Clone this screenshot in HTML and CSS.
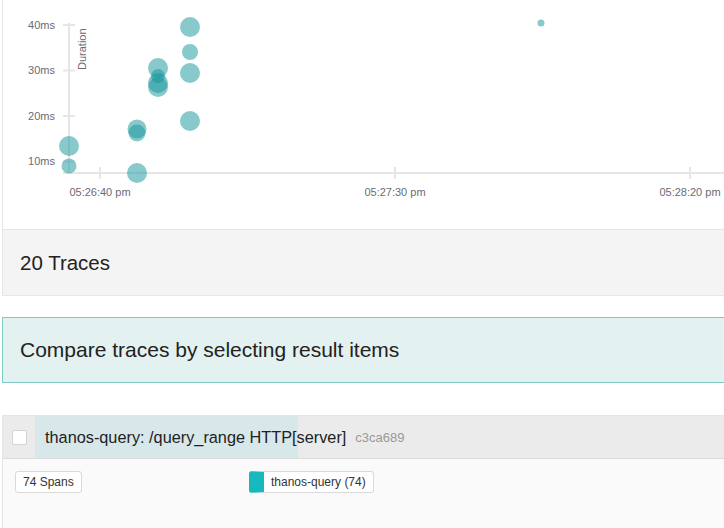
FILE: index.html
```html
<!DOCTYPE html>
<html lang="en">
<head>
<meta charset="utf-8">
<title>Search results</title>
<link rel="stylesheet" href="styles.css">
</head>
<body>
<main class="page">
  <section class="card">
    <div class="chart">
      <svg class="plot" width="721" height="229" viewBox="3 0 721 229" xmlns="http://www.w3.org/2000/svg">
        <g class="axis">
          <line x1="69" y1="23" x2="69" y2="174"/>
          <line x1="63" y1="25" x2="75" y2="25"/>
          <line x1="63" y1="70.5" x2="75" y2="70.5"/>
          <line x1="63" y1="116" x2="75" y2="116"/>
          <line x1="63" y1="161.5" x2="75" y2="161.5"/>
          <line x1="63" y1="173" x2="724" y2="173"/>
          <line x1="100" y1="167" x2="100" y2="179"/>
          <line x1="395" y1="167" x2="395" y2="179"/>
          <line x1="690" y1="167" x2="690" y2="179"/>
        </g>
        <g class="tick-text y-ticks">
          <text x="55" y="25" dy="0.35em">40ms</text>
          <text x="55" y="70.5" dy="0.35em">30ms</text>
          <text x="55" y="116" dy="0.35em">20ms</text>
          <text x="55" y="161.5" dy="0.35em">10ms</text>
        </g>
        <g class="tick-text x-ticks">
          <text x="100" y="195.5">05:26:40 pm</text>
          <text x="395" y="195.5">05:27:30 pm</text>
          <text x="690" y="195.5">05:28:20 pm</text>
        </g>
        <text class="tick-text axis-title" transform="translate(86 70) rotate(-90)">Duration</text>
        <g class="dots">
          <circle cx="69" cy="146" r="10"/>
          <circle cx="69" cy="166" r="7.5"/>
          <circle cx="137" cy="173" r="10"/>
          <circle cx="137" cy="129" r="9.5"/>
          <circle cx="137" cy="133" r="8.5"/>
          <circle cx="158" cy="68" r="10"/>
          <circle cx="158" cy="76" r="7"/>
          <circle cx="158" cy="83" r="10"/>
          <circle cx="158" cy="87" r="10"/>
          <circle cx="190" cy="27" r="10"/>
          <circle cx="190" cy="52" r="8"/>
          <circle cx="190" cy="73" r="10"/>
          <circle cx="190" cy="121" r="10"/>
          <circle cx="541" cy="23" r="3.5"/>
        </g>
      </svg>
    </div>
    <div class="card-header">
      <h2 class="count">20 Traces</h2>
    </div>
  </section>

  <div class="compare">Compare traces by selecting result items</div>

  <article class="result">
    <div class="result-head">
      <span class="check-cell"><span class="checkbox"></span></span>
      <div class="title-wrap">
        <div class="duration-bar" style="width:263px"></div>
        <span class="title">thanos-query: /query_range HTTP[server]</span>
        <span class="trace-id">c3ca689</span>
      </div>
    </div>
    <div class="result-body">
      <div class="col-spans"><span class="tag">74 Spans</span></div>
      <div class="col-services"><span class="tag service">thanos-query (74)</span></div>
    </div>
  </article>
</main>
</body>
</html>
```

FILE: styles.css
```css
html, body {
  margin: 0;
  padding: 0;
  background: #fff;
  overflow: hidden;
}

body {
  font-family: "Liberation Sans", Arial, sans-serif;
  color: #222;
}

.page {
  padding-left: 2px;
}

.card {
  border: 1px solid #e6e6e6;
  border-top: none;
  border-right: none;
  overflow: hidden;
}

.chart {
  height: 229px;
  background: #fff;
}

.plot {
  display: block;
}

.axis line {
  stroke: #e6e6e9;
  stroke-width: 2;
}

.tick-text {
  font-family: "Liberation Sans", Arial, sans-serif;
  font-size: 11px;
  fill: #6b6b76;
}

.y-ticks text {
  text-anchor: end;
}

.x-ticks text {
  text-anchor: middle;
}

.dots circle {
  fill: #12939a;
  fill-opacity: 0.5;
}

.card-header {
  height: 65px;
  border-top: 1px solid #e6e6e6;
  background: #f4f4f4;
  padding-left: 17px;
  display: flex;
  align-items: center;
}

.count {
  margin: 0;
  font-size: 20.5px;
  font-weight: normal;
  color: #222;
}

.compare {
  margin-top: 21px;
  height: 64px;
  border: 1px solid #80c9c4;
  border-right: none;
  background: #e3f1f0;
  padding-left: 17px;
  display: flex;
  align-items: center;
  font-size: 21px;
  color: #222;
}

.result {
  margin-top: 32px;
  border: 1px solid #e6e6e6;
  border-right: none;
}

.result-head {
  display: flex;
  height: 42px;
  background: #ebebeb;
  border-bottom: 1px solid #dcdcdc;
}

.check-cell {
  width: 32px;
  display: flex;
  align-items: center;
  padding-left: 9px;
  box-sizing: border-box;
}

.checkbox {
  width: 13px;
  height: 13px;
  border: 1px solid #d4d4d4;
  border-radius: 2px;
  background: #fff;
}

.title-wrap {
  position: relative;
  flex: 1;
  display: flex;
  align-items: center;
  padding-left: 10px;
}

.duration-bar {
  position: absolute;
  left: 0;
  top: 0;
  bottom: 0;
  background: #d8e7ea;
}

.title {
  position: relative;
  font-size: 16.3px;
  color: #222;
}

.trace-id {
  position: relative;
  margin-left: 9px;
  font-size: 13px;
  color: #999;
}

.result-body {
  background: #fafafa;
  height: 80px;
  padding: 12px 0 0 12px;
  display: flex;
  align-items: flex-start;
}

.col-spans {
  width: 234px;
}

.tag {
  display: inline-block;
  height: 20px;
  line-height: 20px;
  padding: 0 7px;
  border: 1px solid #d9d9d9;
  border-radius: 3px;
  background: #fff;
  font-size: 12px;
  color: #333;
}

.tag.service {
  border-left: 15px solid #17b8be;
}
```
